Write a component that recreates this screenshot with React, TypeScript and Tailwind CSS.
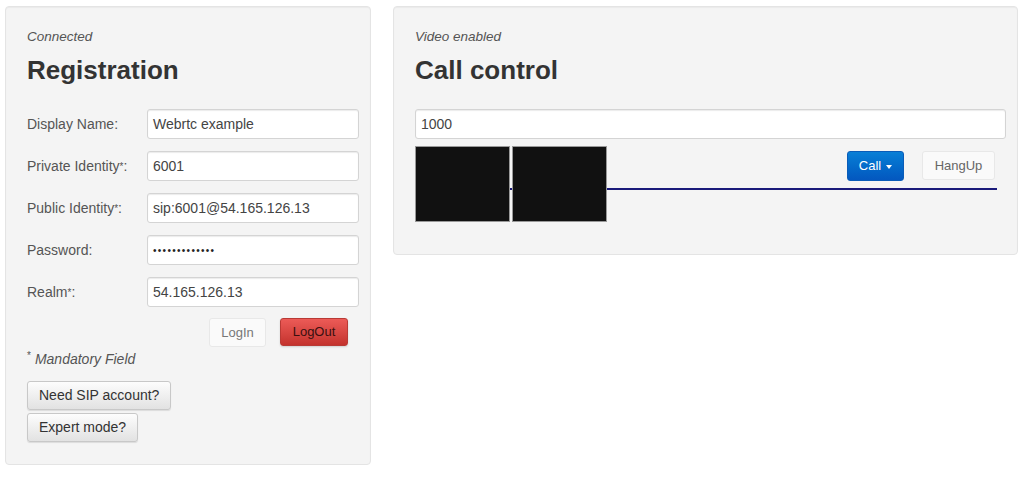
import React from 'react';

const fields = [
  { label: 'Display Name', req: false, value: 'Webrtc example' },
  { label: 'Private Identity', req: true, value: '6001' },
  { label: 'Public Identity', req: true, value: 'sip:6001@54.165.126.13' },
  { label: 'Password', req: false, value: '•••••••••••••', pwd: true },
  { label: 'Realm', req: true, value: '54.165.126.13' },
];

const font = { fontFamily: '"Liberation Sans", Arial, sans-serif' };

function Field({ value, pwd }: { value: string; pwd?: boolean }) {
  return (
    <div className="h-[30px] bg-white border border-[#d4d4d4] rounded-[3px] shadow-[inset_0_1px_1px_rgba(0,0,0,0.08)] flex items-center px-[5px] text-[14px] text-[#444]">
      <span className={pwd ? 'text-[10px] tracking-[1.3px] text-[#222]' : ''}>{value}</span>
    </div>
  );
}

export default function App() {
  return (
    <div className="w-[1024px] h-[502px] bg-white flex items-start gap-[22px] pl-[5px] pt-[6px]" style={font}>
      {/* Registration */}
      <div className="w-[366px] h-[459px] bg-[#f4f4f4] border border-[#e4e4e4] rounded-[4px] shadow-[inset_0_1px_1px_rgba(0,0,0,0.04)] pl-[21px] pr-[11px] pt-[20px]">
        <div className="text-[13.5px] italic text-[#555] leading-[20px]">Connected</div>
        <h1 className="mt-[8px] text-[26px] font-bold text-[#333] leading-[30px]">Registration</h1>
        <div className="mt-[24px] flex flex-col gap-[12px]">
          {fields.map((f) => (
            <div key={f.label} className="flex items-center">
              <div className="w-[120px] text-[14px] text-[#555]">
                {f.label}
                {f.req && <sup className="text-[10px] relative top-[-1px]">*</sup>}:
              </div>
              <div className="w-[212px]">
                <Field value={f.value} pwd={f.pwd} />
              </div>
            </div>
          ))}
        </div>
        <div className="mt-[11px] flex justify-end gap-[14px] pr-[11px]">
          <button className="w-[57px] h-[29px] bg-[#fafafa] border border-[#e8e8e8] rounded-[3px] text-[13px] text-[#777]">
            LogIn
          </button>
          <button className="w-[68px] h-[28px] rounded-[3px] text-[13px] text-[#3a1010] bg-gradient-to-b from-[#ec5b57] to-[#c4322d] border border-[#b93a35] shadow-[0_1px_2px_rgba(0,0,0,0.15)]">
            LogOut
          </button>
        </div>
        <div className="mt-[2px] text-[14px] italic text-[#555] leading-[20px]">
          <sup className="text-[10px] not-italic mr-[4px]">*</sup>Mandatory Field
        </div>
        <div className="mt-[12px] flex flex-col items-start gap-[3px]">
          <button className="h-[29px] px-[11px] rounded-[3px] text-[14px] text-[#333] bg-gradient-to-b from-[#fdfdfd] to-[#e2e2e2] border border-[#c8c8c8] shadow-[0_1px_1px_rgba(0,0,0,0.1)]">
            Need SIP account?
          </button>
          <button className="h-[29px] px-[11px] rounded-[3px] text-[14px] text-[#333] bg-gradient-to-b from-[#fdfdfd] to-[#e2e2e2] border border-[#c8c8c8] shadow-[0_1px_1px_rgba(0,0,0,0.1)]">
            Expert mode?
          </button>
        </div>
      </div>

      {/* Call control */}
      <div className="w-[625px] h-[249px] bg-[#f4f4f4] border border-[#e4e4e4] rounded-[4px] shadow-[inset_0_1px_1px_rgba(0,0,0,0.04)] pl-[21px] pr-[11px] pt-[20px]">
        <div className="text-[13.5px] italic text-[#555] leading-[20px]">Video enabled</div>
        <h1 className="mt-[8px] text-[26px] font-bold text-[#333] leading-[30px]">Call control</h1>
        <div className="mt-[24px]">
          <Field value="1000" />
        </div>
        <div className="mt-[7px] flex items-start">
          <div className="flex items-center gap-[2px] relative">
            <div className="absolute left-[94px] top-[42px] w-[4px] h-[2px] bg-[#1a1a7a]" />
            <div className="w-[95px] h-[76px] bg-[#111] border border-[#999] relative" />
            <div className="w-[95px] h-[76px] bg-[#111] border border-[#999] relative" />
          </div>
          <div className="flex-1 flex flex-col mr-[9px]">
            <div className="mt-[5px] flex justify-end gap-[18px] pr-[2px]">
              <button className="w-[57px] h-[30px] rounded-[3px] text-[13px] text-white bg-gradient-to-b from-[#0a7fd6] to-[#0457bf] border border-[#0a5cb8] flex items-center justify-center gap-[5px]">
                Call
                <span className="w-0 h-0 border-l-[3.5px] border-r-[3.5px] border-t-[4px] border-l-transparent border-r-transparent border-t-white mt-[1px]" />
              </button>
              <button className="w-[73px] h-[29px] bg-[#fafafa] border border-[#e8e8e8] rounded-[3px] text-[13px] text-[#666]">
                HangUp
              </button>
            </div>
            <div className="mt-[7px] h-[2px] bg-[#1a1a7a]" />
          </div>
        </div>
      </div>
    </div>
  );
}
